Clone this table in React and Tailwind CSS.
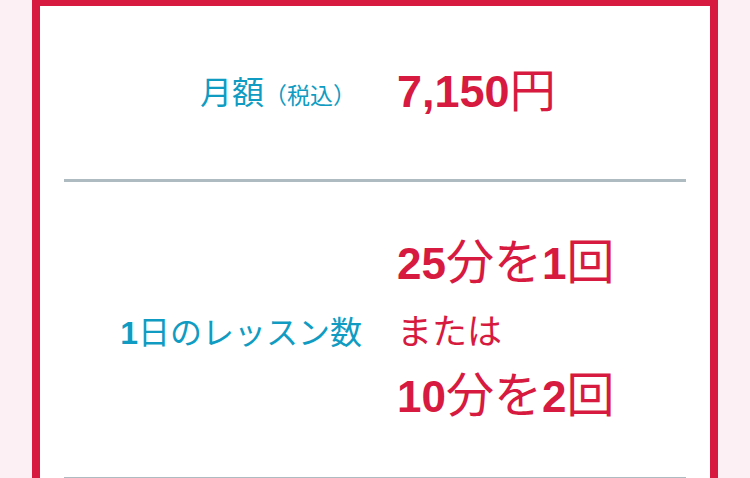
export default function App() {
  const font = { fontFamily: '"Liberation Sans", "Noto Sans CJK JP", sans-serif' };
  return (
    <div className="min-h-screen bg-[#fdf0f4] px-8" style={font}>
      <div className="border-x-8 border-t-[6px] border-[#d71a40] bg-white px-6">
        <div className="flex h-[173px] items-center">
          <div className="w-[292px] text-right text-[#109cc2] leading-none">
            <span className="text-[32px]">月額</span>
            <span className="text-[23px]">（税込）</span>
          </div>
          <div className="ml-[41px] -mt-[3px] leading-none text-[#d71a40]">
            <span className="text-[45px] font-bold">7,150</span>
            <span className="text-[46px]">円</span>
          </div>
        </div>
        <div className="h-[3px] bg-[#aebbc1]" />
        <div className="flex h-[295px] items-center">
          <div className="w-[298px] pt-[6px] text-right text-[32px] leading-none text-[#109cc2]">
            <span className="font-bold">1</span>日のレッスン数
          </div>
          <div className="ml-[35px] flex flex-col text-[#d71a40]">
            <div className="h-[60px] text-[48px] leading-[60px]">
              <span className="text-[44px] font-bold">25</span>分を<span className="text-[44px] font-bold">1</span>回
            </div>
            <div className="mt-[15px] h-[48px] text-[35px] leading-[48px]">または</div>
            <div className="mt-[10px] h-[60px] text-[48px] leading-[60px]">
              <span className="text-[44px] font-bold">10</span>分を<span className="text-[44px] font-bold">2</span>回
            </div>
          </div>
        </div>
        <div className="h-[3px] bg-[#aebbc1]" />
      </div>
    </div>
  );
}
